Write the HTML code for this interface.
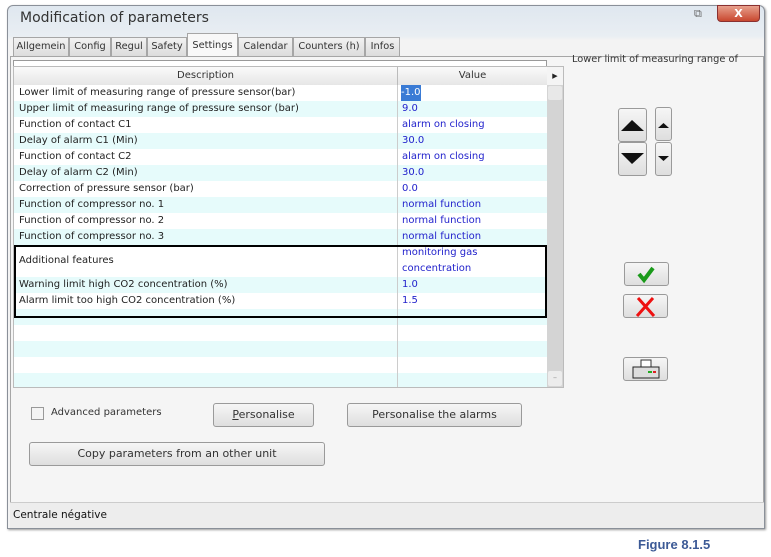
<!DOCTYPE html>
<html><head><style>
*{box-sizing:border-box;margin:0;padding:0}
body{width:771px;height:557px;background:#fff;position:relative;font-family:"DejaVu Sans","Liberation Sans",sans-serif;font-size:10px;color:#222;overflow:hidden}
.a{position:absolute}
.win{left:7px;top:5px;width:758px;height:524px;border:1px solid #8a9099;border-radius:6px 6px 0 0;background:linear-gradient(#dfe7ef,#e9eef3 30px,#f3f3f3 34px);box-shadow:1px 1px 2px #999}
.tab{position:absolute;top:37px;height:19px;border:1px solid #a6a6a6;border-bottom:none;background:linear-gradient(#f2f2f2,#dcdcdc);font-size:9.8px;line-height:18px;text-align:center;color:#333;white-space:nowrap;overflow:hidden}
.row{position:absolute;left:14px;width:533px;height:16px;font-size:10px;line-height:16px}
.row .d{position:absolute;left:5px}
.row .v{position:absolute;left:388px;color:#2222cc}
.btn{position:absolute;border:1px solid #9a9a9a;border-radius:3px;background:linear-gradient(#f6f6f6,#dedede);text-align:center;font-size:11px;line-height:20px;color:#333}
</style></head><body>
<div class="a win"></div>
<div class="a" style="left:20px;top:10px;font-size:14px;color:#333">Modification of parameters</div>
<div class="a" style="left:694px;top:7px;font-size:11px;color:#666">⧉</div>
<div class="a" style="left:717px;top:5px;width:43px;height:17px;border:1px solid #8a3030;border-radius:0 0 4px 4px;background:linear-gradient(#e8a08c,#c8472f);color:#fff;font-weight:bold;font-size:11px;text-align:center;line-height:15px">X</div>
<div class="tab" style="left:13px;width:56px">Allgemein</div>
<div class="tab" style="left:69px;width:42px">Config</div>
<div class="tab" style="left:111px;width:36px">Regul</div>
<div class="tab" style="left:147px;width:40px">Safety</div>
<div class="tab" style="left:187px;width:51px;top:33px;height:24px;background:#f8f8f8;line-height:24px">Settings</div>
<div class="tab" style="left:238px;width:55px">Calendar</div>
<div class="tab" style="left:293px;width:72px">Counters (h)</div>
<div class="tab" style="left:365px;width:35px">Infos</div>
<div class="a" style="left:10px;top:56px;width:754px;height:446px;border:1px solid #a6a6a6;border-bottom:none;background:#f5f5f5"></div>
<div class="a" style="left:13px;top:60px;width:534px;height:7px;border:1px solid #999;border-bottom:none;background:#fff"></div>
<div class="a" style="left:13px;top:66px;width:551px;height:322px;border:1px solid #bbb;background:#fff"></div>
<div class="a" style="left:14px;top:67px;width:384px;height:18px;background:linear-gradient(#fafafa,#e6e6e6);border-right:1px solid #bbb;text-align:center;line-height:18px;color:#333">Description</div>
<div class="a" style="left:398px;top:67px;width:149px;height:18px;background:linear-gradient(#fafafa,#e6e6e6);text-align:center;line-height:18px;color:#333">Value</div>
<div class="a" style="left:547px;top:67px;width:16px;height:18px;background:#f4f4f4;font-size:7px;text-align:center;line-height:18px">▶</div>
<div class="a" style="left:547px;top:85px;width:16px;height:302px;background:#d4d4d4"></div>
<div class="a" style="left:548px;top:86px;width:14px;height:14px;background:#e8e8e8;border-radius:2px"></div>
<div class="a" style="left:548px;top:371px;width:14px;height:15px;background:#ececec;border-radius:2px;text-align:center;font-size:8px;color:#999;line-height:14px">–</div>
<div class="row" style="top:85px;background:#fff"><span class="d">Lower limit of measuring range of pressure sensor(bar)</span><span class="v" style="background:#3a7bd5;color:#fff;left:387px">-1.0</span></div>
<div class="row" style="top:101px;background:#e6fbfb"><span class="d">Upper limit of measuring range of pressure sensor (bar)</span><span class="v">9.0</span></div>
<div class="row" style="top:117px;background:#fff"><span class="d">Function of contact C1</span><span class="v">alarm on closing</span></div>
<div class="row" style="top:133px;background:#e6fbfb"><span class="d">Delay of alarm C1 (Min)</span><span class="v">30.0</span></div>
<div class="row" style="top:149px;background:#fff"><span class="d">Function of contact C2</span><span class="v">alarm on closing</span></div>
<div class="row" style="top:165px;background:#e6fbfb"><span class="d">Delay of alarm C2 (Min)</span><span class="v">30.0</span></div>
<div class="row" style="top:181px;background:#fff"><span class="d">Correction of pressure sensor (bar)</span><span class="v">0.0</span></div>
<div class="row" style="top:197px;background:#e6fbfb"><span class="d">Function of compressor no. 1</span><span class="v">normal function</span></div>
<div class="row" style="top:213px;background:#fff"><span class="d">Function of compressor no. 2</span><span class="v">normal function</span></div>
<div class="row" style="top:229px;background:#e6fbfb"><span class="d">Function of compressor no. 3</span><span class="v">normal function</span></div>
<div class="row" style="top:245px;height:32px;background:#fff"><span class="d" style="top:8px">Additional features</span><span class="v">monitoring gas<br>concentration</span></div>
<div class="row" style="top:277px;background:#e6fbfb"><span class="d">Warning limit high CO2 concentration (%)</span><span class="v">1.0</span></div>
<div class="row" style="top:293px;background:#fff"><span class="d">Alarm limit too high CO2 concentration (%)</span><span class="v">1.5</span></div>
<div class="row" style="top:309px;background:#e6fbfb"></div>
<div class="row" style="top:325px;background:#fff"></div>
<div class="row" style="top:341px;background:#e6fbfb"></div>
<div class="row" style="top:357px;background:#fff"></div>
<div class="row" style="top:373px;height:14px;background:#e6fbfb"></div>
<div class="a" style="left:397px;top:85px;width:1px;height:302px;background:#ccc"></div>
<div class="a" style="left:14px;top:245px;width:533px;height:73px;border:2px solid #000"></div>
<div class="a" style="left:572px;top:54px;font-size:9.8px;color:#333;white-space:nowrap">Lower limit of measuring range of</div>
<div class="btn" style="left:618px;top:108px;width:29px;height:34px"><svg width="27" height="32"><polygon points="2,22 13,11 25,22" fill="#111"/></svg></div>
<div class="btn" style="left:618px;top:142px;width:29px;height:34px"><svg width="27" height="32"><polygon points="2,10 13,21 25,10" fill="#111"/></svg></div>
<div class="btn" style="left:655px;top:107px;width:17px;height:34px"><svg width="15" height="32"><polygon points="2,20 7.5,15 13,20" fill="#111"/></svg></div>
<div class="btn" style="left:655px;top:142px;width:17px;height:34px"><svg width="15" height="32"><polygon points="2,13 7.5,18 13,13" fill="#111"/></svg></div>
<div class="btn" style="left:624px;top:262px;width:45px;height:24px"><svg width="43" height="22"><path d="M14,11 L19,17 L28,5" stroke="#1a9a1a" stroke-width="4" fill="none"/></svg></div>
<div class="btn" style="left:623px;top:294px;width:45px;height:24px"><svg width="43" height="22"><path d="M14,3 L30,21 M29,3 L13,21" stroke="#e11" stroke-width="3" fill="none"/></svg></div>
<div class="btn" style="left:623px;top:357px;width:45px;height:24px"><svg width="43" height="22"><rect x="17" y="2" width="10" height="9" fill="#fff" stroke="#333"/><rect x="9" y="9" width="26" height="11" fill="#ddd" stroke="#222"/><rect x="24" y="13" width="4" height="2" fill="#2a2"/><rect x="29" y="13" width="3" height="2" fill="#d22"/></svg></div>
<div class="a" style="left:31px;top:407px;width:13px;height:13px;border:1px solid #999;background:#f4f4f4"></div>
<div class="a" style="left:51px;top:407px;font-size:10px;color:#333">Advanced parameters</div>
<div class="btn" style="left:213px;top:403px;width:101px;height:24px;line-height:22px"><u>P</u>ersonalise</div>
<div class="btn" style="left:347px;top:403px;width:175px;height:24px;line-height:22px">Personalise the alarms</div>
<div class="btn" style="left:29px;top:442px;width:296px;height:24px;line-height:22px">Copy parameters from an other unit</div>
<div class="a" style="left:10px;top:502px;width:754px;height:1px;background:#ccc"></div>
<div class="a" style="left:10px;top:503px;width:754px;height:25px;background:#ededed"></div>
<div class="a" style="left:13px;top:509px;font-size:10.5px;color:#111">Centrale négative</div>
<div class="a" style="left:638px;top:537px;font-family:'Liberation Sans',sans-serif;font-weight:bold;font-size:13px;color:#3c5a96">Figure 8.1.5</div>
</body></html>
